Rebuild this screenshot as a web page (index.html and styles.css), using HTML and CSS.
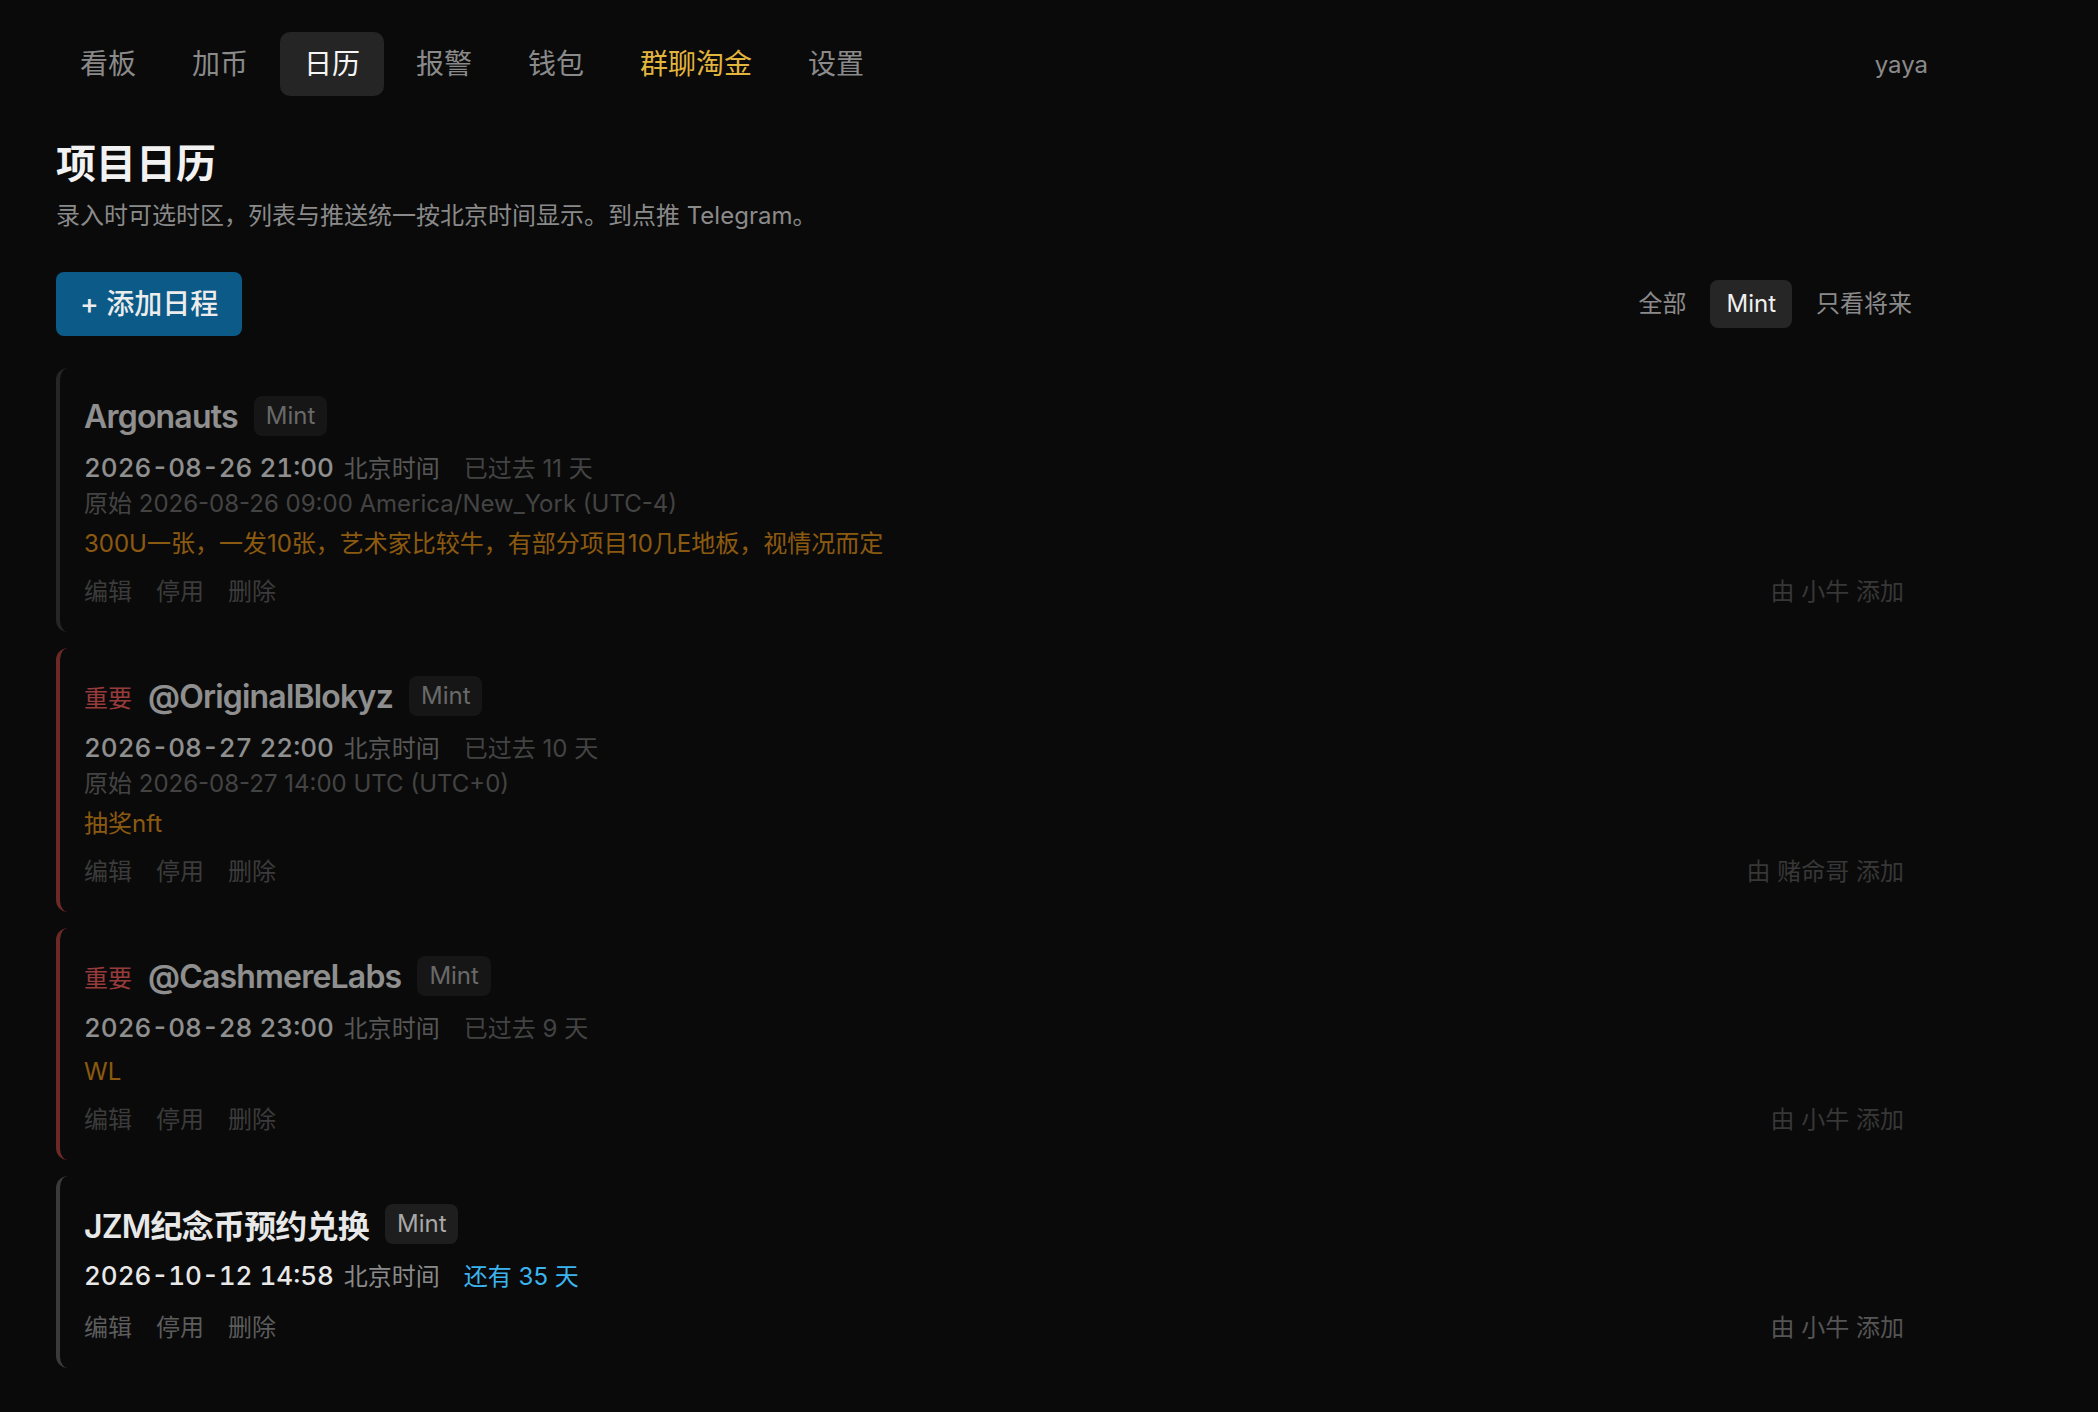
FILE: index.html
```html
<!DOCTYPE html>
<html lang="zh-CN">
<head>
    <meta charset="UTF-8">
    <meta name="viewport" content="width=device-width, initial-scale=1.0">
    <title>项目日历</title>
    <link rel="stylesheet" href="styles.css">
</head>
<body>
<div class="page">

    <header class="topbar">
        <nav class="tabs">
            <a class="tab" href="#">看板</a>
            <a class="tab" href="#">加币</a>
            <a class="tab active" href="#">日历</a>
            <a class="tab" href="#">报警</a>
            <a class="tab" href="#">钱包</a>
            <a class="tab gold" href="#">群聊淘金</a>
            <a class="tab" href="#">设置</a>
        </nav>
        <span class="user">yaya</span>
    </header>

    <main>
        <h1 class="page-title">项目日历</h1>
        <p class="page-desc">录入时可选时区，列表与推送统一按北京时间显示。到点推 Telegram。</p>

        <div class="toolbar">
            <button class="btn-add">+ 添加日程</button>
            <div class="filters">
                <span class="filter">全部</span>
                <span class="filter active">Mint</span>
                <span class="filter">只看将来</span>
            </div>
        </div>

        <ul class="events">
            <li class="event past">
                <div class="event-head">
                    <span class="event-name">Argonauts</span>
                    <span class="badge">Mint</span>
                </div>
                <div class="event-time">
                    <span class="time">2026-08-26 21:00</span>
                    <span class="tz">北京时间</span>
                    <span class="rel">已过去 11 天</span>
                </div>
                <div class="event-orig">原始 2026-08-26 09:00 America/New_York (UTC-4)</div>
                <div class="event-note">300U一张，一发10张，艺术家比较牛，有部分项目10几E地板，视情况而定</div>
                <div class="event-foot">
                    <div class="actions">
                        <a href="#">编辑</a>
                        <a href="#">停用</a>
                        <a href="#">删除</a>
                    </div>
                    <span class="owner">由 小牛 添加</span>
                </div>
            </li>

            <li class="event past important">
                <div class="event-head">
                    <span class="flag">重要</span>
                    <span class="event-name">@OriginalBlokyz</span>
                    <span class="badge">Mint</span>
                </div>
                <div class="event-time">
                    <span class="time">2026-08-27 22:00</span>
                    <span class="tz">北京时间</span>
                    <span class="rel">已过去 10 天</span>
                </div>
                <div class="event-orig">原始 2026-08-27 14:00 UTC (UTC+0)</div>
                <div class="event-note">抽奖nft</div>
                <div class="event-foot">
                    <div class="actions">
                        <a href="#">编辑</a>
                        <a href="#">停用</a>
                        <a href="#">删除</a>
                    </div>
                    <span class="owner">由 赌命哥 添加</span>
                </div>
            </li>

            <li class="event past important">
                <div class="event-head">
                    <span class="flag">重要</span>
                    <span class="event-name">@CashmereLabs</span>
                    <span class="badge">Mint</span>
                </div>
                <div class="event-time">
                    <span class="time">2026-08-28 23:00</span>
                    <span class="tz">北京时间</span>
                    <span class="rel">已过去 9 天</span>
                </div>
                <div class="event-note">WL</div>
                <div class="event-foot">
                    <div class="actions">
                        <a href="#">编辑</a>
                        <a href="#">停用</a>
                        <a href="#">删除</a>
                    </div>
                    <span class="owner">由 小牛 添加</span>
                </div>
            </li>

            <li class="event">
                <div class="event-head">
                    <span class="event-name">JZM纪念币预约兑换</span>
                    <span class="badge">Mint</span>
                </div>
                <div class="event-time">
                    <span class="time">2026-10-12 14:58</span>
                    <span class="tz">北京时间</span>
                    <span class="rel soon">还有 35 天</span>
                </div>
                <div class="event-foot">
                    <div class="actions">
                        <a href="#">编辑</a>
                        <a href="#">停用</a>
                        <a href="#">删除</a>
                    </div>
                    <span class="owner">由 小牛 添加</span>
                </div>
            </li>
        </ul>
    </main>

</div>
</body>
</html>
```

FILE: styles.css
```css
body {
    margin: 0;
    background-color: #0a0a0a;
    color: #e8e8e8;
    font-family: "Inter", "Noto Sans CJK SC", sans-serif;
}

a {
    color: inherit;
    text-decoration: none;
}

.page {
    width: 1872px;
    padding: 32px 56px 40px 56px;
}

/* barra superior */
.topbar {
    display: flex;
    align-items: center;
    justify-content: space-between;
}

.tabs {
    display: flex;
    gap: 8px;
}

.tab {
    padding: 12px 24px;
    font-size: 28px;
    line-height: 40px;
    color: #8a8a8a;
    border-radius: 10px;
}

.tab.active {
    background-color: #252525;
    color: #f5f5f5;
}

.tab.gold {
    color: #e2b53e;
}

.user {
    font-size: 24px;
    color: #8a8a8a;
}

/* cabecera */
.page-title {
    margin: 40px 0 0 0;
    font-size: 40px;
    line-height: 56px;
    font-weight: 700;
    color: #f2f2f2;
}

.page-desc {
    margin: 8px 0 0 0;
    font-size: 24px;
    line-height: 32px;
    color: #8a8a8a;
}

.toolbar {
    display: flex;
    align-items: center;
    justify-content: space-between;
    margin-top: 40px;
}

.btn-add {
    padding: 12px 24px;
    font-family: inherit;
    font-size: 28px;
    line-height: 40px;
    font-weight: 500;
    color: #ececec;
    background-color: #0b5a88;
    border: none;
    border-radius: 8px;
}

.filters {
    display: flex;
    gap: 8px;
}

.filter {
    padding: 8px 16px;
    font-size: 24px;
    line-height: 32px;
    color: #8a8a8a;
    border-radius: 8px;
}

.filter.active {
    background-color: #262626;
    color: #f0f0f0;
}

/* lista de eventos */
.events {
    list-style: none;
    margin: 32px 0 0 0;
    padding: 0;
    display: flex;
    flex-direction: column;
    gap: 16px;
}

.event {
    padding: 28px 24px 24px 24px;
    border-left: 4px solid #3a3a3a;
    border-radius: 12px;
}

.event.important {
    border-left-color: #b03c3c;
}

.event.past {
    opacity: 0.6;
}

.event-head {
    display: flex;
    align-items: center;
    height: 40px;
}

.flag {
    font-size: 24px;
    color: #f25c5c;
    margin-right: 16px;
}

.event-name {
    font-size: 32px;
    letter-spacing: -0.8px;
    font-weight: 600;
    color: #e8e8e8;
}

.badge {
    margin-left: 16px;
    padding: 4px 12px;
    font-size: 24px;
    line-height: 32px;
    color: #a8a8a8;
    background-color: #1e1e1e;
    border-radius: 8px;
}

.event-time {
    display: flex;
    align-items: baseline;
    height: 40px;
    margin-top: 12px;
    line-height: 40px;
}

.time {
    font-size: 26px;
    font-weight: 500;
    font-variant-numeric: tabular-nums;
    color: #e8e8e8;
}

.tz {
    margin-left: 10px;
    font-size: 24px;
    color: #8a8a8a;
}

.rel {
    margin-left: 24px;
    font-size: 24px;
    color: #6a6a6a;
}

.rel.soon {
    color: #3bb4ef;
}

.event-orig {
    font-size: 24px;
    line-height: 32px;
    color: #6a6a6a;
}

.event-note {
    margin-top: 8px;
    font-size: 24px;
    line-height: 32px;
    color: #e09017;
}

.event-foot {
    display: flex;
    justify-content: space-between;
    margin-top: 16px;
    font-size: 24px;
    line-height: 32px;
}

.actions {
    display: flex;
    gap: 24px;
}

.actions a {
    color: #5c5c5c;
}

.owner {
    color: #555;
}
```
